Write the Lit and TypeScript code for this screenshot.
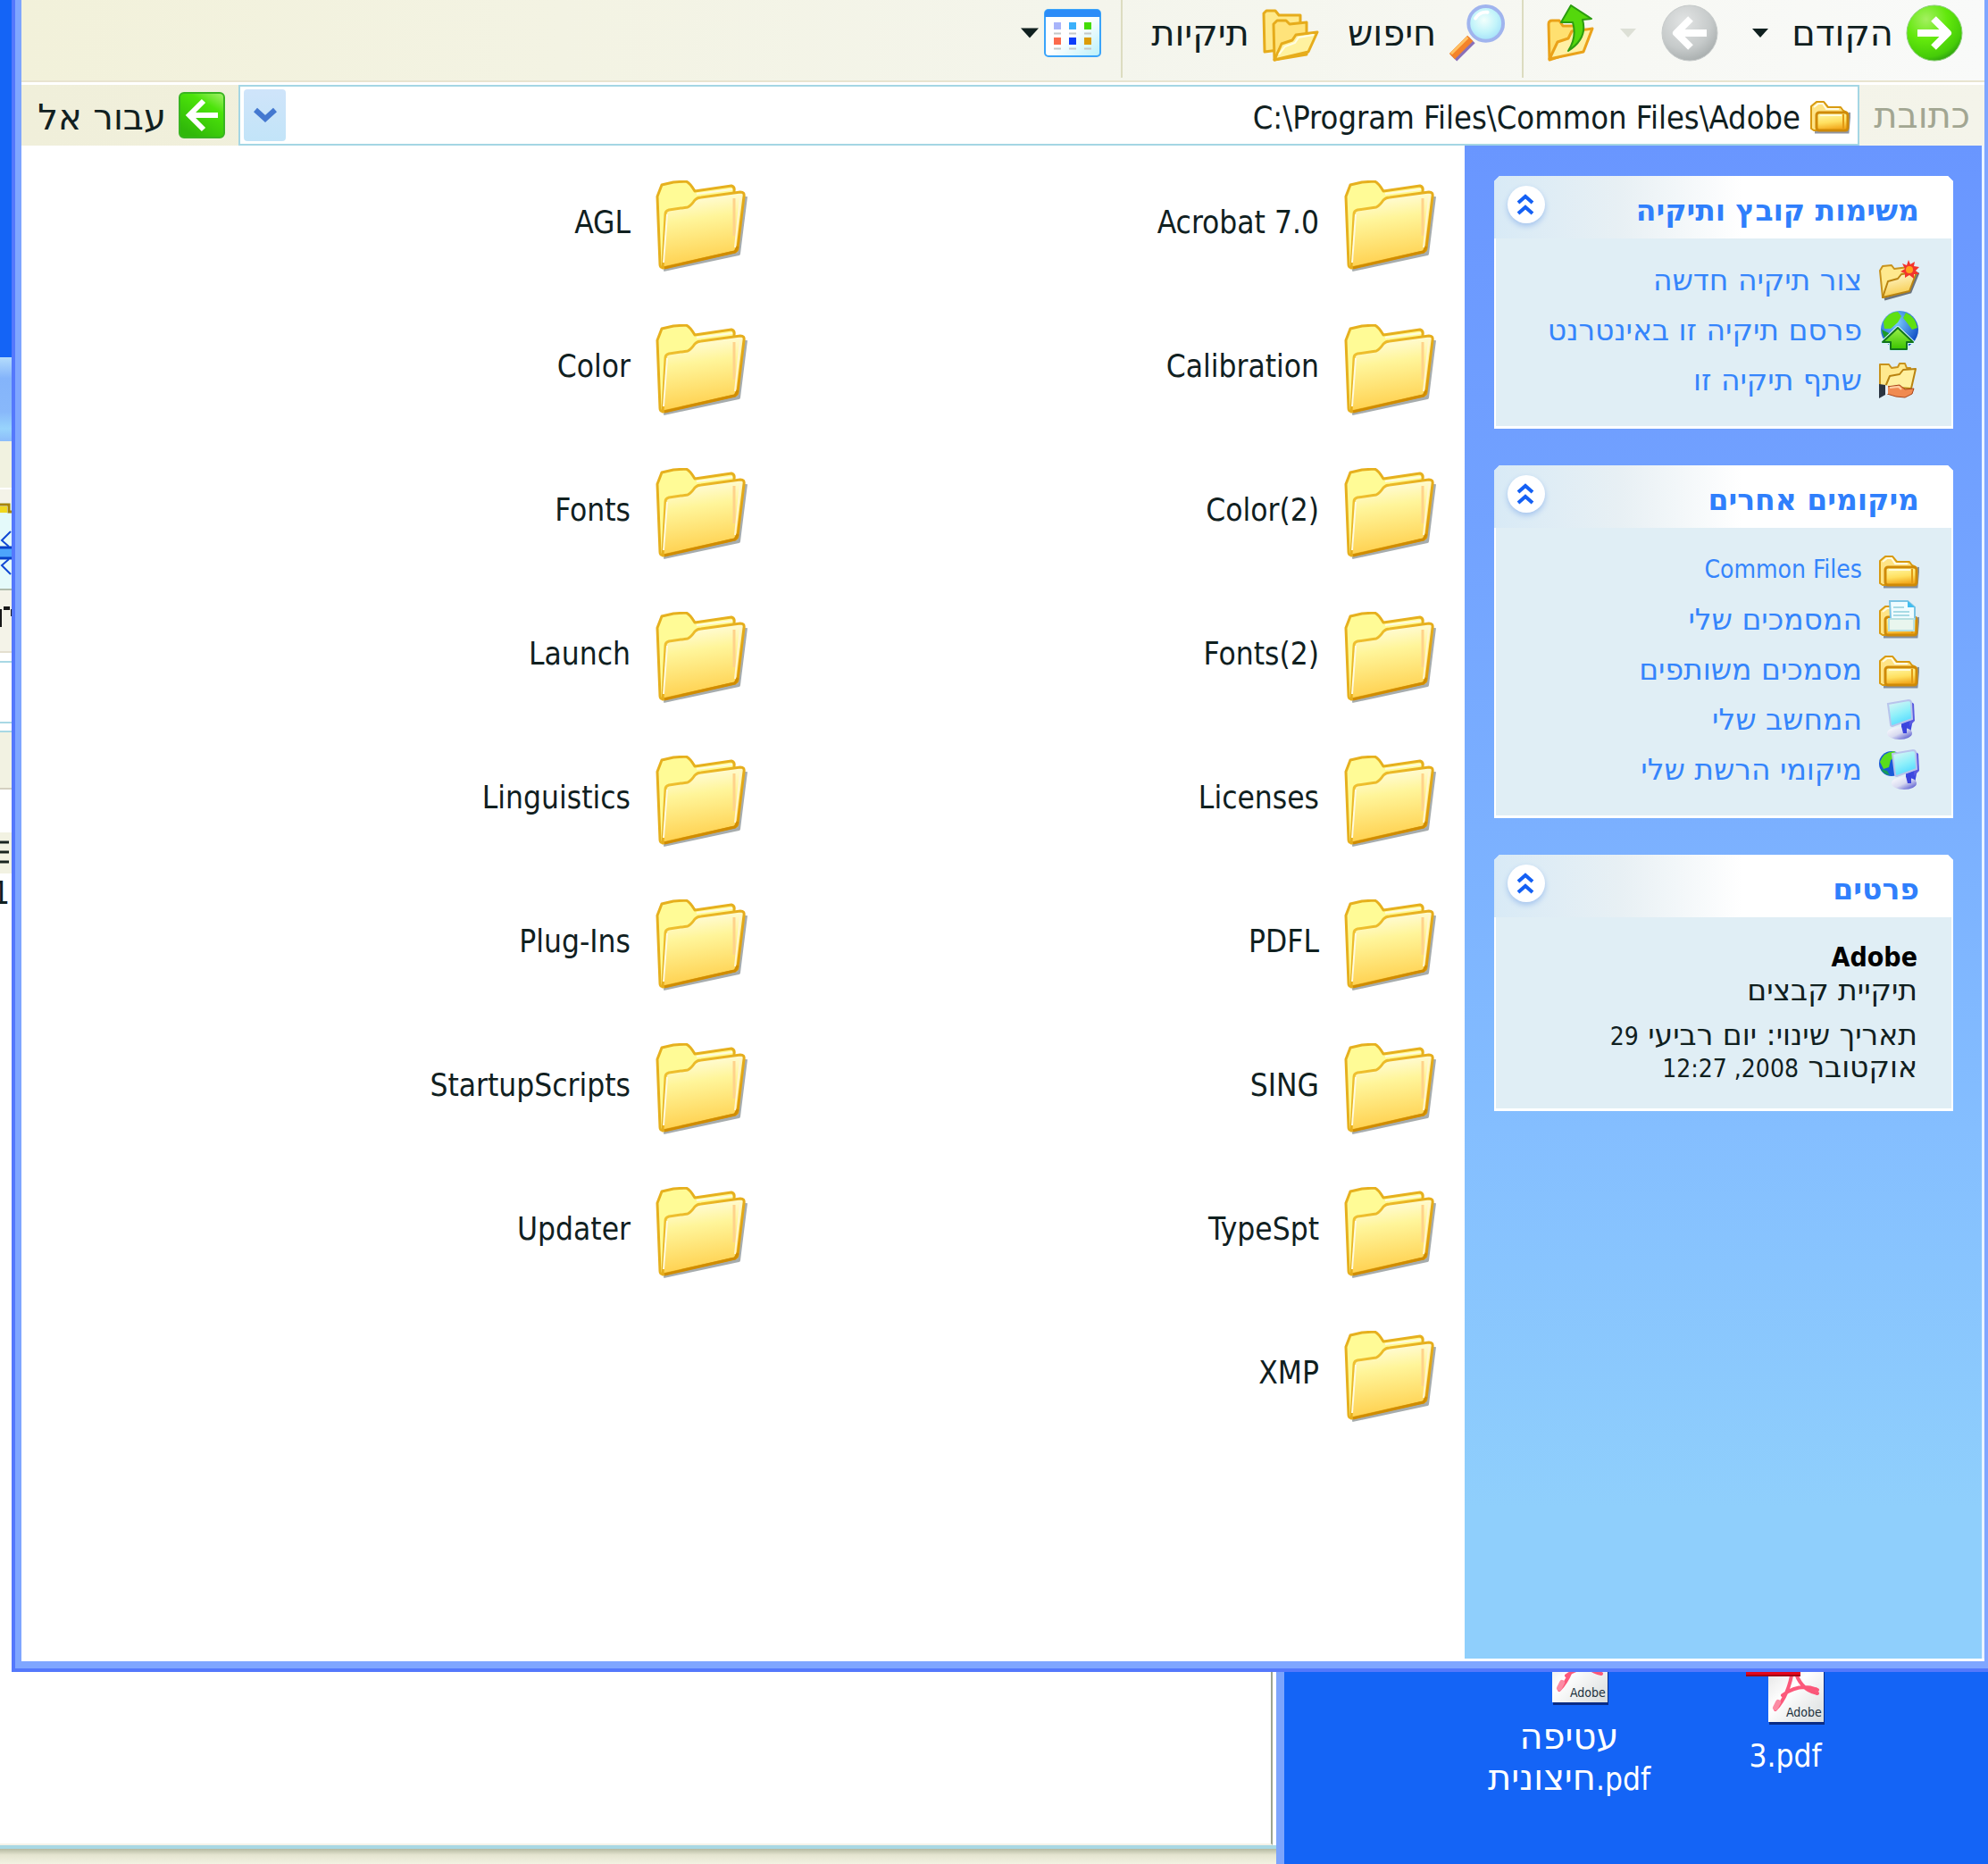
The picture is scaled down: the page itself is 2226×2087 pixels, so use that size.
import { LitElement, html, svg, css } from "lit";
import { customElement, property } from "lit/decorators.js";

const bigFolder = html`<svg class="big" viewBox="0 0 104 104" aria-hidden="true">
  <defs>
    <linearGradient id="bf" x1="0" y1="0" x2="0.15" y2="1">
      <stop offset="0" stop-color="#fffef0" /><stop offset="0.4" stop-color="#fff59a" /><stop offset="1" stop-color="#ffd04e" />
    </linearGradient>
    <linearGradient id="be" x1="0" y1="0" x2="1" y2="1">
      <stop offset="0" stop-color="#f2c838" /><stop offset="1" stop-color="#d99200" />
    </linearGradient>
  </defs>
  <path d="M9 100 L93 82 L101 18" fill="none" stroke="#4d5a5c" stroke-opacity=".5" stroke-width="4" stroke-linejoin="round" />
  <path d="M2 18 L7 5 L20 2 L34 1 Q38 2 44 12 L85 6 Q89 7 88 12 L90 30 L84 76 L8 97 Q5 98 5 94 Z" fill="#fffb96" stroke="#e6b01e" stroke-width="3" stroke-linejoin="round" />
  <path d="M46 15 L86 10" stroke="#fffbe0" stroke-width="2" />
  <path d="M11 38 Q11 34 15 33 L36 30 Q40 28 44 22 Q47 19 51 19 L95 13 Q100 13 99 18 L92 76 Q92 79 88 80 L8 98 Z" fill="url(#bf)" stroke="url(#be)" stroke-width="3" stroke-linejoin="round" />
  <path d="M10 98 L89 80 L92 74" fill="none" stroke="#d08c00" stroke-width="3" stroke-linejoin="round" />
  <path d="M13 38 L9 92" stroke="#fffbe0" stroke-width="2" />
  <path d="M88 20 L88 62" stroke="#ffd28a" stroke-width="3" />
  <path d="M95 18 L89 75" stroke="#fff6d0" stroke-width="2" />
</svg>`;

const smallBody = svg`
  <defs>
    <linearGradient id="sf" x1="0" y1="0" x2="0.2" y2="1">
      <stop offset="0" stop-color="#fffbb0"/><stop offset="0.6" stop-color="#ffe060"/><stop offset="1" stop-color="#f2a81c"/>
    </linearGradient>
  </defs>
  <path d="M6 42 L43 42 L45 20" fill="none" stroke="#465064" stroke-opacity=".6" stroke-width="3"/>
  <path d="M2 38 L2 13 L8 8 L16 8 L21 14 L35 14 L38 18 L42 20 L42 40 L5 40 Z" fill="#ffe486" stroke="#d89a10" stroke-width="2" stroke-linejoin="round"/>
  <path d="M5 14 L10 10 L15 10 L19 16 L33 16" fill="none" stroke="#fffbe4" stroke-width="2"/>
  <rect x="8" y="20" width="35" height="20" rx="3" fill="url(#sf)" stroke="#cf8a08" stroke-width="3"/>
  <path d="M12 23 L36 23" stroke="#fffbd8" stroke-width="2"/>
  <path d="M38 22 L38 39" stroke="#e39a14" stroke-width="2"/>`;

const smallFolder = html`<svg class="small" viewBox="0 0 46 46" aria-hidden="true">${smallBody}</svg>`;

const docsFolder = html`<svg class="small" viewBox="0 0 46 46" aria-hidden="true">${smallBody}
  <path d="M14 22 L13 2 L33 2 L41 9 L41 22 Z" fill="#effcff" stroke="#7cc4e4" stroke-width="2"/>
  <path d="M33 2 L33 9 L41 9 Z" fill="#41bdf0"/>
  <path d="M17 9 L29 9 M17 14 L35 14 M17 18 L35 18" stroke="#a8dbe4" stroke-width="2"/>
  <rect x="12" y="22" width="28" height="13" fill="#e9f6ee" stroke="#b8e0e0" stroke-width="2"/>
</svg>`;

const openBody = svg`
  <defs>
    <linearGradient id="of" x1="0" y1="0" x2="0.3" y2="1">
      <stop offset="0" stop-color="#fffde0"/><stop offset="1" stop-color="#f8cc4c"/>
    </linearGradient>
  </defs>
  <path d="M7 44 L36 36 L45 14" fill="none" stroke="#39404c" stroke-opacity=".7" stroke-width="3"/>
  <path d="M2 12 L5 7 L15 6 L18 10 L34 8 L36 14 L34 34 L5 42 Z" fill="#ffe98e" stroke="#c8921c" stroke-width="2" stroke-linejoin="round"/>
  <path d="M5 42 L11 24 L22 21 L26 16 L43 14 L35 35 Z" fill="url(#of)" stroke="#b98310" stroke-width="2" stroke-linejoin="round"/>`;

const newFolder = html`<svg class="small" viewBox="0 0 46 46" aria-hidden="true">${openBody}
  <path d="M34 0 L36 5 L41 2 L40 7 L46 8 L42 12 L46 16 L40 16 L40 21 L35 17 L30 20 L30 15 L25 13 L30 10 L27 4 L32 6 Z" fill="#f4342c"/>
  <circle cx="35" cy="11" r="4" fill="#ffa01e"/>
</svg>`;

const webFolder = html`<svg class="small" viewBox="0 0 46 46" aria-hidden="true">
  <defs>
    <radialGradient id="gl" cx=".4" cy=".3" r=".7"><stop offset="0" stop-color="#7fd0ff"/><stop offset="1" stop-color="#0d4cc4"/></radialGradient>
    <linearGradient id="ga" x1="0" y1="0" x2="0" y2="1"><stop offset="0" stop-color="#9af04a"/><stop offset="1" stop-color="#3cc400"/></linearGradient>
  </defs>
  <circle cx="24" cy="22" r="21" fill="url(#gl)"/>
  <path d="M6 13 Q12 2 22 2 L26 7 L22 14 L14 21 L7 21 Z M31 3 Q42 8 44 20 L38 22 L32 14 L28 9 Z" fill="#5fe010"/>
  <path d="M4 22 Q6 31 10 35 L12 26 Z" fill="#1c9a28"/>
  <path d="M22 20 L39 36 L32 36 L32 44 L14 44 L14 36 L5 36 Z" fill="none" stroke="#d4f4ff" stroke-width="4" stroke-linejoin="round"/>
  <path d="M22 20 L39 36 L32 36 L32 44 L14 44 L14 36 L5 36 Z" fill="url(#ga)" stroke="#13751c" stroke-width="2" stroke-linejoin="round"/>
</svg>`;

const shareFolder = html`<svg class="small" viewBox="0 0 46 46" aria-hidden="true">
  <path d="M2 30 L2 5 L12 5 L15 9 L22 8 L24 4 L30 4 L32 9 L36 9 L36 28 Z" fill="#ffe98e" stroke="#c8921c" stroke-width="2" stroke-linejoin="round"/>
  <path d="M8 30 L13 18 L24 16 L28 11 L42 10 L37 32 Z" fill="#fff0a0" stroke="#b98310" stroke-width="2" stroke-linejoin="round"/>
  <path d="M10 30 L24 28 L30 33 L40 32 L38 38 L30 42 L20 41 L10 38 Z" fill="#f08a50" stroke="#a8461c" stroke-width="1"/>
  <path d="M13 31 L23 30 L26 33" fill="none" stroke="#ffd0a4" stroke-width="2"/>
  <path d="M1 27 L8 28 L8 39 L1 43 Z" fill="#2b3440"/>
  <path d="M8 28 L11 29 L11 38 L8 39 Z" fill="#e8eef4"/>
</svg>`;

const pcBody = svg`
  <defs>
    <linearGradient id="sc" x1="0" y1="0" x2="0.4" y2="1"><stop offset="0" stop-color="#e8f6f4"/><stop offset="0.6" stop-color="#8ff0fa"/><stop offset="1" stop-color="#58dcff"/></linearGradient>
    <linearGradient id="st" x1="0" y1="0" x2="1" y2="1"><stop offset="0" stop-color="#ffffff"/><stop offset="0.5" stop-color="#d8daf0"/><stop offset="1" stop-color="#3a3cc8"/></linearGradient>
  </defs>
  <path d="M26 27 L39 22 L36 38 L26 38 Z" fill="#3c48e0"/>
  <ellipse cx="24" cy="38" rx="14" ry="7" fill="url(#st)"/>
  <path d="M26 30 L32 28 L32 38 L28 38 Z" fill="#3a44dc"/>
  <path d="M36 2 L40 5 L41 24 L35 30 Z" fill="#5a5ae0"/>
  <path d="M11 5 L34 1 Q37 1 37 4 L38 22 L16 30 Q14 30 14 28 Z" fill="url(#sc)" stroke="#b8c4ec" stroke-width="2"/>`;

const computer = html`<svg class="small" viewBox="0 0 46 46" aria-hidden="true">${pcBody}</svg>`;

const network = html`<svg class="small" viewBox="0 0 46 46" aria-hidden="true">
  <circle cx="15" cy="16" r="14" fill="#1a5ad8"/>
  <path d="M2 14 Q6 3 18 2 L22 6 L14 12 L12 20 L6 22 Z" fill="#58dc1c"/>
  <path d="M3 22 L10 24 L13 29 Q6 28 3 22 Z" fill="#169a5c"/>
  <g transform="translate(5 0)">${pcBody}</g>
</svg>`;

const backIcon = html`<svg class="round" viewBox="0 0 64 64" aria-hidden="true">
  <defs><radialGradient id="gr" cx=".35" cy=".25" r=".85"><stop offset="0" stop-color="#a4f060"/><stop offset=".45" stop-color="#62e80c"/><stop offset=".8" stop-color="#46cc08"/><stop offset="1" stop-color="#228c14"/></radialGradient></defs>
  <circle cx="32" cy="32" r="31" fill="url(#gr)" stroke="#8ccf78" stroke-width="1"/>
  <path d="M13 32 L46 32 M31 16 L47 32 L31 48" fill="none" stroke="#fff" stroke-width="8" stroke-linejoin="round"/>
</svg>`;

const forwardIcon = html`<svg class="round" viewBox="0 0 64 64" aria-hidden="true">
  <defs><radialGradient id="gy" cx=".4" cy=".3" r=".8"><stop offset="0" stop-color="#e2e4e4"/><stop offset=".6" stop-color="#c6caca"/><stop offset="1" stop-color="#a0a6a6"/></radialGradient></defs>
  <circle cx="32" cy="32" r="31" fill="url(#gy)" stroke="#c6caca" stroke-width="1"/>
  <path d="M51 32 L18 32 M33 16 L17 32 L33 48" fill="none" stroke="#fff" stroke-width="8" stroke-linejoin="round"/>
</svg>`;

const upIcon = html`<svg class="up" viewBox="0 0 54 64" aria-hidden="true">
  <path d="M2 22 Q2 18 6 18 L14 18 L18 24 L30 24 L34 28 L34 52 L3 62 Z" fill="#ffe070" stroke="#eaa21a" stroke-width="3" stroke-linejoin="round"/>
  <path d="M3 61 L12 42 L24 38 L28 30 L51 27 L41 53 Z" fill="#fff0a4" stroke="#eaa21a" stroke-width="3" stroke-linejoin="round"/>
  <path d="M27 1 L50 16 L40 17 Q46 38 24 52 Q34 36 29 20 L16 20 Z" fill="#54d80c" stroke="#2c9c10" stroke-width="2" stroke-linejoin="round"/>
</svg>`;

const searchIcon = html`<svg class="round" viewBox="0 0 66 66" aria-hidden="true">
  <defs><radialGradient id="ln" cx=".45" cy=".4" r=".6"><stop offset="0" stop-color="#f2fffc"/><stop offset=".6" stop-color="#c2f4fa"/><stop offset="1" stop-color="#a4e0fa"/></radialGradient></defs>
  <path d="M27 41 L6 62" stroke="#8a70b8" stroke-width="10"/>
  <path d="M25 39 L4 60" stroke="#f4832a" stroke-width="9"/>
  <path d="M22 38 L3 57" stroke="#ffc062" stroke-width="3"/>
  <circle cx="43" cy="22" r="20" fill="url(#ln)" stroke="#a0b4ee" stroke-width="4"/>
  <path d="M31 16 Q36 8 45 9" fill="none" stroke="#fff" stroke-width="4" stroke-linecap="round"/>
</svg>`;

const foldersIcon = html`<svg class="round" viewBox="0 0 64 64" aria-hidden="true">
  <g stroke="#e6ac1c" stroke-width="3" stroke-linejoin="round">
    <path d="M2 10 L5 7 L15 7 L19 12 L43 12 L43 48 L3 53 Z" fill="#ffe98a"/>
    <path d="M13 22 L17 18 L27 18 L31 22 L50 20 L50 56 L14 62 Z" fill="#ffe37a"/>
    <path d="M14 62 L22 44 L34 40 L38 34 L62 31 L52 53 Z" fill="#fff2a0"/>
  </g>
  <path d="M19 56 L26 47 L37 43 L41 37 L58 34" fill="none" stroke="#fffde6" stroke-width="2"/>
</svg>`;

const viewsIcon = html`<svg class="views" viewBox="0 0 64 54" aria-hidden="true">
  <defs><linearGradient id="vw" x1="0" y1="0" x2="1" y2="1"><stop offset=".5" stop-color="#fff"/><stop offset="1" stop-color="#b8f0fa"/></linearGradient></defs>
  <rect x="1" y="1" width="62" height="52" rx="4" fill="url(#vw)" stroke="#3aa4fa" stroke-width="2"/>
  <path d="M1 9 L1 5 Q1 1 5 1 L59 1 Q63 1 63 5 L63 9 Z" fill="#2c8cf8"/>
  <rect x="11" y="15" width="8" height="8" fill="#a8b4fa"/><rect x="28" y="15" width="8" height="8" fill="#3cb0fa"/><rect x="45" y="15" width="8" height="8" fill="#44dc04"/>
  <rect x="11" y="32" width="8" height="8" fill="#fc6a4c"/><rect x="28" y="32" width="8" height="8" fill="#0c3cfa"/><rect x="45" y="32" width="8" height="8" fill="#dc9c08"/>
  <path d="M11 27.5h8M28 27.5h8M45 27.5h8M11 44.5h8M28 44.5h8M45 44.5h8" stroke="#c4c8c8" stroke-width="2"/>
</svg>`;

const goIcon = html`<svg class="go" viewBox="0 0 52 52" aria-hidden="true">
  <defs><linearGradient id="go" x1="1" y1="0" x2="0.4" y2="1"><stop offset="0" stop-color="#a8f070"/><stop offset=".35" stop-color="#4ce40a"/><stop offset="1" stop-color="#30b80a"/></linearGradient></defs>
  <rect x="1" y="1" width="50" height="50" rx="5" fill="url(#go)" stroke="#38b420" stroke-width="2"/>
  <path d="M44 26 L14 26 M28 10 L12 26 L28 42" fill="none" stroke="#fff" stroke-width="6"/>
</svg>`;

const arrow = html`<svg class="arrow" viewBox="0 0 18 10" aria-hidden="true"><path d="M0 0 L18 0 L9 10 Z" fill="currentColor" /></svg>`;

const pdfIcon = (cls: string, bar: boolean) => html`<svg class=${cls} viewBox="0 0 88 64" aria-hidden="true">
  <defs><linearGradient id="pd" x1="0" y1="0" x2="1" y2="1"><stop offset="0" stop-color="#e4e4e4"/><stop offset=".4" stop-color="#fff"/><stop offset="1" stop-color="#d8dcdc"/></linearGradient></defs>
  <rect x="26" y="2" width="62" height="61" fill="#0a2c86" />
  <rect x="25" y="0" width="62" height="60" fill="url(#pd)" />
  <path d="M33 46 Q50 28 53 -6 Q58 24 80 28 M41 30 Q60 16 80 24" fill="none" stroke="#fc3c64" stroke-width="4" stroke-linecap="round" opacity=".85"/>
  <path d="M33 44 L36 38" stroke="#fc8ca4" stroke-width="6" stroke-linecap="round"/>
  <text class="stamp" x="45" y="54">Adobe</text>
  ${bar ? svg`<rect x="0" y="0" width="61" height="8" fill="#e4061c"/><rect x="0" y="7" width="61" height="2" fill="#a00414"/>` : ""}
</svg>`;

@customElement("task-panel")
class TaskPanel extends LitElement {
  @property() heading = "";

  static styles = css`
    :host { display: block; }
    .panel {
      background: #fff;
      padding: 0 2px 3px;
      clip-path: polygon(6px 0, calc(100% - 6px) 0, 100% 6px, 100% 100%, 0 100%, 0 6px);
    }
    .head {
      display: flex;
      align-items: center;
      justify-content: space-between;
      height: 70px;
      margin: 0 -2px;
      padding: 0 38px 0 15px;
      background: linear-gradient(to right, #d8eaf6, #e8f0f4 28%, #fff 54%);
    }
    h2 {
      margin: 0;
      padding-top: 8px;
      font-family: "DejaVu Sans", sans-serif;
      font-size: 33px;
      line-height: 36px;
      font-weight: bold;
      color: #2f7ffc;
    }
    button {
      width: 42px;
      height: 42px;
      margin-bottom: 6px;
      padding: 0;
      border: 0;
      border-radius: 50%;
      background: #fff;
      box-shadow: 0 3px 6px #a4c4ee;
    }
    svg { display: block; width: 42px; height: 42px; }
    .body { background: #e0eef5; }
  `;

  render() {
    return html`<section class="panel">
      <div class="head">
        <h2>${this.heading}</h2>
        <button aria-label=${this.heading}>
          <svg viewBox="0 0 42 42" aria-hidden="true"><path d="M12 19 L20 12 L28 19 M12 31 L20 24 L28 31" fill="none" stroke="#1460f4" stroke-width="4" /></svg>
        </button>
      </div>
      <div class="body"><slot></slot></div>
    </section>`;
  }
}

const files = [
  "Acrobat 7.0", "Calibration", "Color(2)", "Fonts(2)", "Licenses", "PDFL", "SING", "TypeSpt", "XMP",
  "AGL", "Color", "Fonts", "Launch", "Linguistics", "Plug-Ins", "StartupScripts", "Updater",
];

const tasks = [
  { icon: newFolder, text: "צור תיקיה חדשה" },
  { icon: webFolder, text: "פרסם תיקיה זו באינטרנט" },
  { icon: shareFolder, text: "שתף תיקיה זו" },
];

const places = [
  { icon: smallFolder, text: "Common Files", latin: true },
  { icon: docsFolder, text: "המסמכים שלי" },
  { icon: smallFolder, text: "מסמכים משותפים" },
  { icon: computer, text: "המחשב שלי" },
  { icon: network, text: "מיקומי הרשת שלי" },
];

@customElement("app-root")
class AppRoot extends LitElement {
  static styles = css`
    :host {
      display: block;
      font-family: "DejaVu Sans Condensed", "Noto Sans", "Liberation Sans", sans-serif;
      font-size: 35px;
      line-height: 44px;
      color: #10201f;
    }
    * { box-sizing: border-box; }
    button, input { font: inherit; color: inherit; }
    button { border: 0; padding: 0; background: none; }
    a { color: inherit; text-decoration: none; }
    svg { display: block; flex: none; }

    /* Hebrew is set wider and larger than the Latin beside it */
    .tools span, .address label, .gobtn span, .heb {
      font-family: "DejaVu Sans", sans-serif;
      font-size: 40px;
      line-height: 44px;
      white-space: nowrap;
    }

    .desktop {
      position: relative;
      display: flex;
      flex-direction: column;
      min-height: 100vh;
      overflow: hidden;
      background: #1464f6;
    }

    /* window behind */
    .behind {
      position: absolute;
      top: 400px;
      bottom: 0;
      left: 0;
      width: 1438px;
      display: flex;
      flex-direction: column;
      border-right: 9px solid #7ca4fc;
      background: #fff;
    }
    .b-title { height: 94px; background: linear-gradient(#b4dcfc, #84b4fa 25%, #88b8fa 65%, #98d4fc 85%, #8cbcfa); }
    .b-menu { height: 54px; background: #f1f2e0; border-bottom: 2px solid #fff; }
    .b-tools { height: 183px; background: #f4f3e8; border-bottom: 2px solid #e4dfcf; }
    .b-tools svg { width: 16px; height: 183px; }
    .b-addr { height: 70px; margin-top: 9px; border-top: 2px solid #a8d8e4; border-bottom: 2px solid #a8d8e4; background: #fff; }
    .b-tabs { height: 66px; margin-top: 8px; background: #f2f2e2; border-top: 2px solid #a8d8e4; border-bottom: 2px solid #d4d0c0; }
    .b-row { height: 46px; margin-top: 48px; background: #f2f2e2; overflow: hidden; }
    .b-row svg { width: 14px; height: 46px; }
    .b-num { width: 11px; display: flex; justify-content: flex-end; }
    .b-list { flex: 1; margin-right: 4px; border-right: 2px solid #9ca490; border-bottom: 2px solid #f4f2e8; overflow: hidden; }
    .b-status { height: 21px; border-top: 4px solid #a8d8e4; background: linear-gradient(#b4b8a0, #e4e4d0 40%, #f2f2e2); }

    /* front window */
    .window {
      position: relative;
      flex: 1;
      display: flex;
      flex-direction: column;
      margin-left: 13px;
      border: solid #7fa6ff;
      border-width: 0 4px 12px 11px;
      background: #fff;
    }
    .window::before {
      content: "";
      position: absolute;
      inset: 0 -4px -12px -11px;
      border: solid #5478fc;
      border-width: 0 0 4px 4px;
      pointer-events: none;
    }
    .tools {
      display: flex;
      align-items: flex-start;
      height: 92px;
      padding: 5px 24px 0 0;
      border-bottom: 2px solid #e8e4d0;
      background: linear-gradient(to right, #f2f1da, #f4f5ec 55%, #f9faf9);
    }
    .tools button { display: flex; align-items: center; height: 64px; }
    .round { width: 64px; height: 64px; }
    .up { width: 54px; height: 64px; }
    .views { width: 64px; height: 54px; }
    .arrow { width: 18px; height: 10px; }
    .back { gap: 14px; }
    .menu { margin: 0 26px 0 38px; }
    .menu.faint { color: #dde0d6; margin: 0 28px 0 28px; }
    .upbtn { margin-left: 26px; }
    .sep { width: 2px; height: 87px; margin-top: -5px; background: #dcdcc0; }
    .search { margin-right: 18px; gap: 14px; }
    .folders { margin: 0 32px 0 32px; gap: 14px; }
    .view { margin-right: 22px; gap: 6px; }
    .view .arrow { width: 20px; height: 12px; }

    .address {
      display: flex;
      align-items: center;
      height: 71px;
      padding-left: 20px;
      padding-right: 16px;
      border-top: 3px solid #fff;
      background: linear-gradient(to right, #f0efda, #f4f4ea);
    }
    .address label { width: 124px; color: #a2a692; }
    .box {
      flex: 1;
      display: flex;
      align-items: center;
      height: 68px;
      padding: 0 8px 0 4px;
      border: 2px solid #a4d6e4;
      background: #fff;
    }
    .box svg.small { margin-left: 10px; }
    .box input {
      flex: 1;
      min-width: 0;
      height: 60px;
      padding: 4px 0 0;
      border: 0;
      outline: 0;
      background: none;
      font-size: 36px;
      text-align: right;
    }
    .drop {
      display: grid;
      place-items: center;
      width: 47px;
      height: 58px;
      border-radius: 4px;
      background: linear-gradient(#cfe4fa, #c2e4f8);
    }
    .drop svg { width: 26px; height: 18px; }
    .gobtn { display: flex; align-items: center; gap: 14px; margin-right: 15px; width: 208px; }
    .gobtn span { padding-top: 4px; }
    .go { width: 52px; height: 52px; }
    .small { width: 46px; height: 46px; }

    .content { flex: 1; display: flex; padding-bottom: 3px; }
    .side {
      flex: none;
      width: 582px;
      display: flex;
      flex-direction: column;
      gap: 41px;
      padding: 34px 32px 40px 33px;
      border-right: 3px solid #eaf4ff;
      background: linear-gradient(#6996ff, #72a2ff 25%, #84beff 65%, #8fcffc 90%);
    }
    .side ul { list-style: none; margin: 0; display: flex; flex-direction: column; gap: 10px; padding: 24px 36px 28px 34px; }
    .side li a { display: flex; align-items: center; gap: 18px; height: 46px; color: #3585fc; }
    .side .heb { font-size: 33px; line-height: 36px; }
    .lat { font-size: 28px; line-height: 36px; }
    .details { padding: 28px 38px 28px 20px; font-size: 28px; line-height: 36px; }
    .details b { font-size: 30px; line-height: 1px; color: #000; }
    .details p { margin: 0; }
    .details .lat { font-family: "DejaVu Sans Condensed", "Noto Sans", sans-serif; line-height: 1px; }
    .details p + p + p { margin-top: 14px; }
    .files {
      flex: 1;
      display: grid;
      grid-auto-flow: column;
      grid-template-rows: repeat(9, 104px);
      grid-template-columns: 1fr 1fr;
      row-gap: 57px;
      align-content: start;
      margin: 0;
      padding: 39px 31px 40px 43px;
      list-style: none;
    }
    .files a { display: inline-flex; align-items: center; gap: 28px; }
    .files span { padding-bottom: 10px; }
    .big { width: 104px; height: 104px; }

    .icons { display: flex; align-items: flex-start; gap: 56px; height: 215px; padding-right: 134px; }
    .icons a { display: flex; flex-direction: column; align-items: center; gap: 12px; width: 186px; color: #fff; text-align: center; direction: ltr; white-space: nowrap; }
    .pdf { width: 88px; height: 64px; margin-top: -4px; }
    .pdf.high { margin-top: -26px; }
    .stamp { font-size: 14px; fill: #20303c; }
  `;

  render() {
    return html`<main class="desktop" dir="rtl">
      <div class="behind" dir="ltr">
        <div class="b-title"></div>
        <div class="b-menu"></div>
        <div class="b-tools">
          <svg viewBox="0 0 16 183" aria-hidden="true">
            <rect y="15" width="16" height="98" fill="#e4fafa" />
            <path d="M0 17 H10 V25 H16" fill="none" stroke="#a88408" stroke-width="3" />
            <path d="M0 19 H8 V26 H0 Z" fill="#f0d820" />
            <rect y="66" width="16" height="10" fill="#4ca4fc" />
            <path d="M0 65 H16 M0 77 H16" stroke="#0840c8" stroke-width="3" />
            <path d="M12 47 L2 57 L10 64 M12 95 L2 85 L10 78" fill="none" stroke="#1048d4" stroke-width="2" />
            <path d="M0 112 H16" stroke="#b0bcac" stroke-width="2" />
            <path d="M0 134 V154 M4 133 H11 M14 134 V142" fill="none" stroke="#181818" stroke-width="4" />
          </svg>
        </div>
        <div class="b-addr"></div>
        <div class="b-tabs"></div>
        <div class="b-row"><svg viewBox="0 0 14 46" aria-hidden="true"><path d="M0 11 H10 M0 22 H10 M0 33 H10" stroke="#18241f" stroke-width="3" /></svg></div>
        <div class="b-num">1</div>
        <div class="b-list"></div>
        <div class="b-status"></div>
      </div>

      <section class="window">
        <nav class="tools">
          <button class="back">${backIcon}<span>הקודם</span></button>
          <button class="menu" aria-label="הקודם">${arrow}</button>
          <button aria-label="הבא">${forwardIcon}</button>
          <button class="menu faint" aria-label="הבא">${arrow}</button>
          <button class="upbtn" aria-label="למעלה">${upIcon}</button>
          <div class="sep"></div>
          <button class="search">${searchIcon}<span>חיפוש</span></button>
          <button class="folders">${foldersIcon}<span>תיקיות</span></button>
          <div class="sep"></div>
          <button class="view" aria-label="תצוגות">${viewsIcon}${arrow}</button>
        </nav>
        <div class="address">
          <label for="path">כתובת</label>
          <div class="box">
            ${smallFolder}
            <input id="path" dir="ltr" value="C:\\Program Files\\Common Files\\Adobe" />
            <button class="drop" aria-label="כתובת">
              <svg viewBox="0 0 26 18" aria-hidden="true"><path d="M2 3 L13 13 L24 3" fill="none" stroke="#4478d0" stroke-width="6" /></svg>
            </button>
          </div>
          <button class="gobtn">${goIcon}<span>עבור אל</span></button>
        </div>
        <div class="content">
          <aside class="side">
            <task-panel heading="משימות קובץ ותיקיה">
              <ul>${tasks.map((t) => html`<li><a href="#">${t.icon}<span class="heb">${t.text}</span></a></li>`)}</ul>
            </task-panel>
            <task-panel heading="מיקומים אחרים">
              <ul>${places.map((t) => html`<li><a href="#">${t.icon}<span class=${t.latin ? "lat" : "heb"}>${t.text}</span></a></li>`)}</ul>
            </task-panel>
            <task-panel heading="פרטים">
              <div class="details">
                <p><b>Adobe</b></p>
                <p class="heb">תיקיית קבצים</p>
                <p class="heb">תאריך שינוי: יום רביעי <span class="lat">29</span><br />אוקטובר <span class="lat">2008, 12:27</span></p>
              </div>
            </task-panel>
          </aside>
          <ul class="files">
            ${files.map((f) => html`<li><a href="#">${bigFolder}<span dir="ltr">${f}</span></a></li>`)}
          </ul>
        </div>
      </section>

      <div class="icons">
        <a href="#">${pdfIcon("pdf", true)}<span>3.pdf</span></a>
        <a href="#">${pdfIcon("pdf high", false)}<span><span class="heb">עטיפה</span><br /><span class="heb">חיצונית</span>.pdf</span></a>
      </div>
    </main>`;
  }
}
